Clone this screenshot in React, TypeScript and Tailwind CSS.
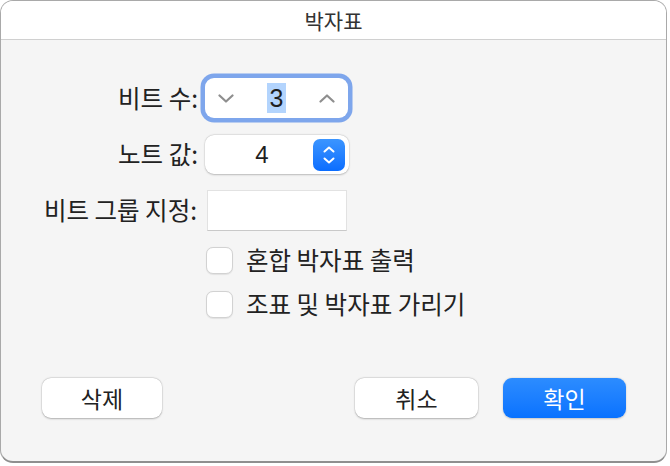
import React from "react";

const font = { fontFamily: '"Noto Sans CJK KR", "Noto Sans", sans-serif' } as React.CSSProperties;
const numFont = { fontFamily: '"Liberation Sans", Arial, sans-serif' } as React.CSSProperties;

function Chevron({ up, color, w = 16, h = 9, sw = 2.2 }: { up?: boolean; color: string; w?: number; h?: number; sw?: number }) {
  return (
    <svg width={w} height={h} viewBox={`0 0 ${w} ${h}`} fill="none">
      <path
        d={up ? `M1.5 ${h - 1.5} L${w / 2} 1.5 L${w - 1.5} ${h - 1.5}` : `M1.5 1.5 L${w / 2} ${h - 1.5} L${w - 1.5} 1.5`}
        stroke={color}
        strokeWidth={sw}
        strokeLinecap="round"
        strokeLinejoin="round"
      />
    </svg>
  );
}

function Checkbox({ label }: { label: string }) {
  return (
    <div className="flex items-center">
      <div className="ml-[205px] w-[27px] h-[27px] rounded-[7px] bg-white border border-[#d2d2d2] shadow-[0_0.5px_1px_rgba(0,0,0,0.08)]" />
      <span className="ml-[13px] text-[24.5px] leading-none text-[#222222]">{label}</span>
    </div>
  );
}

export default function App() {
  return (
    <div className="w-[670px] h-[466px] bg-white" style={font}>
      <div className="w-[667px] h-[463px] rounded-[13px] border border-[#a9a9a9] border-b-[#8f8f8f] border-b-2 overflow-hidden flex flex-col bg-[#f5f5f5]">
        <div className="h-[39px] bg-white border-b border-[#d0d0d0] flex items-center justify-center shrink-0">
          <span className="text-[21px] text-[#333333] leading-none">박자표</span>
        </div>
        <div className="flex flex-col">
          {/* Row 1 */}
          <div className="flex items-center mt-[38px] h-[40px]">
            <div className="w-[198px] text-right text-[24.5px] leading-none text-[#222222] pr-[1px]">비트 수:</div>
            <div className="ml-[6px] w-[143px] h-[40px] bg-white rounded-[9px] shadow-[0_0_0_4.5px_#7ea6ec] flex items-center justify-between px-[13px]">
              <Chevron color="#8e8e8e" />
              <span className="bg-[#b3d4fd] px-[3px] text-[25px] leading-[30px] text-[#1f1f1f]" style={numFont}>3</span>
              <Chevron up color="#8e8e8e" />
            </div>
          </div>
          {/* Row 2 */}
          <div className="flex items-center mt-[17px] h-[39px]">
            <div className="w-[198px] text-right text-[24.5px] leading-none text-[#222222] pr-[1px]">노트 값:</div>
            <div className="ml-[6px] w-[144px] h-[39px] bg-white rounded-[9px] shadow-[0_0.5px_2px_rgba(0,0,0,0.22),0_0_0_0.5px_rgba(0,0,0,0.06)] flex items-center pr-[4px]">
              <span className="flex-1 text-center text-[24px] leading-none text-[#1f1f1f] pl-[6px]" style={numFont}>4</span>
              <div className="w-[32px] h-[32px] rounded-[7px] bg-gradient-to-b from-[#3b95ff] to-[#0a6dff] flex flex-col items-center justify-center gap-[4px]">
                <Chevron up color="#ffffff" w={12} h={7} sw={2} />
                <Chevron color="#ffffff" w={12} h={7} sw={2} />
              </div>
            </div>
          </div>
          {/* Row 3 */}
          <div className="flex items-center mt-[16px] h-[41px]">
            <div className="w-[196px] text-right text-[24.5px] leading-none text-[#222222]">비트 그룹 지정:</div>
            <div className="ml-[10px] w-[140px] h-[41px] bg-white border border-[#e2e2e2] border-b-[#c9c9c9]" />
          </div>
          {/* Checkboxes */}
          <div className="mt-[16px]">
            <Checkbox label="혼합 박자표 출력" />
          </div>
          <div className="mt-[17px]">
            <Checkbox label="조표 및 박자표 가리기" />
          </div>
          {/* Buttons */}
          <div className="flex items-center mt-[60px] pl-[41px] pr-[40px]">
            <button className="w-[120px] h-[40px] rounded-[9px] bg-white shadow-[0_0.5px_2px_rgba(0,0,0,0.25),0_0_0_0.5px_rgba(0,0,0,0.08)] text-[23px] leading-none text-[#222222]">삭제</button>
            <div className="flex-1" />
            <button className="w-[123px] h-[40px] rounded-[9px] bg-white shadow-[0_0.5px_2px_rgba(0,0,0,0.25),0_0_0_0.5px_rgba(0,0,0,0.08)] text-[23px] leading-none text-[#222222]">취소</button>
            <button className="ml-[25px] w-[123px] h-[40px] rounded-[9px] bg-gradient-to-b from-[#2c8cff] to-[#0872ff] shadow-[0_0.5px_2px_rgba(0,0,0,0.2)] text-[23px] leading-none text-white">확인</button>
          </div>
        </div>
      </div>
    </div>
  );
}
